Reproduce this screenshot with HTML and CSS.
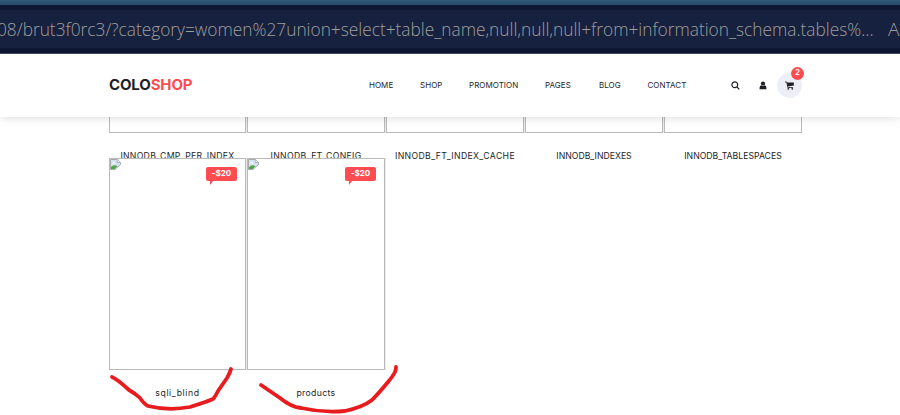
FILE: index.html
```html
<!DOCTYPE html>
<html lang="en">
<head>
<meta charset="utf-8">
<title>Coloshop</title>
<link rel="stylesheet" href="styles.css">
</head>
<body>
<div class="browser">
  <div class="address"><span class="url">08/brut3f0rc3/?category=women%27union+select+table_name,null,null,null+from+information_schema.tables%...</span><span class="reader">A</span></div>
</div>
<header class="header">
  <div class="logo">COLO<span>SHOP</span></div>
  <nav class="nav">
    <a class="w-home">HOME</a><a class="w-shop">SHOP</a><a class="w-promotion">PROMOTION</a><a class="w-pages">PAGES</a><a class="w-blog">BLOG</a><a class="w-contact">CONTACT</a>
  </nav>
  <div class="tools">
    <svg class="search" viewBox="0 0 9 9"><circle cx="3.8" cy="3.8" r="2.9"/><path d="M6 6l2.3 2.3"/></svg>
    <svg class="user" viewBox="0 0 8 9"><circle cx="4" cy="2.5" r="2.1"/><path d="M.6 8.3V6.5Q.6 4.4 2.4 4.2 4 5.3 5.6 4.2 7.4 4.4 7.4 6.5v1.8z"/></svg>
    <div class="cart">
      <svg viewBox="0 0 9 9"><path class="rail" d="M0 1h1.7l1.2 5.6h5"/><path d="M2 1.5h6.8v3L2.7 5.4z"/><circle cx="3.2" cy="7.9" r=".8"/><circle cx="7.3" cy="7.9" r=".8"/></svg>
      <span class="count">2</span>
    </div>
  </div>
</header>
<main class="grid">
  <article class="product upper"><div class="photo"></div><h6><span class="n1">INNODB_CMP_PER_INDEX</span></h6></article>
  <article class="product upper"><div class="photo"></div><h6><span class="n2">INNODB_FT_CONFIG</span></h6></article>
  <article class="product upper"><div class="photo"></div><h6><span class="n3">INNODB_FT_INDEX_CACHE</span></h6></article>
  <article class="product upper"><div class="photo"></div><h6><span class="n4">INNODB_INDEXES</span></h6></article>
  <article class="product upper"><div class="photo"></div><h6><span class="n5">INNODB_TABLESPACES</span></h6></article>
  <article class="product lower"><div class="photo">
    <svg class="broken" viewBox="0 0 11 11"><path fill="#d3e2f5" stroke="#999" stroke-width=".8" d="M.5.5h7l3 3v2L5 10.5H.5z"/><path fill="#fff" stroke="#999" stroke-width=".7" d="M7.3.5v3h3"/><path fill="#fff" d="M2 4q1-2 2.2-.8 1.5 0 1.2 1.3H2z"/><path fill="#4fa83d" d="M1 10V8q3-3 6.4-.8L4.6 10z"/></svg>
    <span class="sale">-$20</span></div><h6><span class="n6">sqli_blind</span></h6></article>
  <article class="product lower"><div class="photo">
    <svg class="broken" viewBox="0 0 11 11"><path fill="#d3e2f5" stroke="#999" stroke-width=".8" d="M.5.5h7l3 3v2L5 10.5H.5z"/><path fill="#fff" stroke="#999" stroke-width=".7" d="M7.3.5v3h3"/><path fill="#fff" d="M2 4q1-2 2.2-.8 1.5 0 1.2 1.3H2z"/><path fill="#4fa83d" d="M1 10V8q3-3 6.4-.8L4.6 10z"/></svg>
    <span class="sale">-$20</span></div><h6><span class="n7">products</span></h6></article>
</main>
<svg class="marks" viewBox="0 0 900 415">
  <path d="M112 377Q117 379 129 390Q136 394 140 398Q144 404 148 406Q168 411 190 407Q206 402 213 399Q215 397 218 391L227 378Q230 373 231 369"/>
  <path d="M261 385L280 398Q291 407 301 408Q323 413 345 411Q363 407 372 400Q378 394 388 382Q393 376 395 372Q396 370 396 367"/>
</svg>
</body>
</html>
```
FILE: styles.css
```css
* { box-sizing: border-box; }
body {
  margin: 0;
  width: 900px;
  height: 415px;
  overflow: hidden;
  background: #fff;
  font-family: Inter, sans-serif;
  color: #1e1e27;
}
.browser {
  height: 54px;
  padding: 5px 0;
  border-bottom: 1px solid #42465c;
  background: linear-gradient(#305878, #264c6a) 0 0 / 100% 5px no-repeat, #0d1731;
}
.address {
  display: flex;
  align-items: center;
  height: 38px;
  margin-top: 5px;
  overflow: hidden;
  background: #16213f;
  color: #a09e9b;
  font: 300 19px/38px "Open Sans", sans-serif;
  white-space: nowrap;
}
.url { flex: none; width: 891px; margin-left: -3px; transform: scaleX(.91); transform-origin: 0 50%; }
.reader { flex: none; }
.header {
  position: relative;
  z-index: 1;
  display: flex;
  align-items: center;
  height: 63px;
  padding-left: 109px;
  background: #fff;
  box-shadow: 0 0 9px rgba(0, 0, 0, .16);
  clip-path: inset(0 0 -12px 0);
}
.logo { width: 260px; padding-bottom: 2px; font-size: 15px; font-weight: 700; letter-spacing: -.15px; }
.logo span { color: #ff4c50; }
.nav { display: flex; width: 362px; padding-bottom: 2px; font-size: 8px; font-weight: 400; letter-spacing: .03px; }
.nav a { flex: none; white-space: nowrap; }
.w-home { width: 51px; }
.w-shop { width: 49px; }
.w-promotion { width: 76px; }
.w-pages { width: 54px; }
.w-blog { width: 48.5px; }
.w-contact { width: 40px; }
.tools { display: flex; align-items: center; }
.search { width: 9px; height: 9px; fill: none; stroke: #1e1e27; stroke-width: 1.2; }
.user { width: 8px; height: 9px; margin-left: 19px; fill: #1e1e27; }
.cart {
  position: relative;
  display: flex;
  align-items: center;
  justify-content: center;
  width: 25px;
  height: 25px;
  margin-left: 10px;
  border-radius: 50%;
  background: #eceff6;
}
.cart svg { width: 9px; height: 9px; fill: #1e1e27; }
.rail { fill: none; stroke: #1e1e27; stroke-width: .9; }
.count {
  position: absolute;
  top: -6px;
  right: -2px;
  width: 13px;
  height: 13px;
  border-radius: 50%;
  background: #ff4c50;
  color: #fff;
  font-size: 8px;
  font-weight: 600;
  line-height: 11px;
  text-align: center;
}
.grid {
  display: grid;
  grid-template-columns: 138px repeat(4, 139px);
  grid-template-rows: 41px 257px;
  margin-left: 109px;
}
.product { border-right: 1px solid #e9e9e9; }
.product:nth-child(5) { border-right-color: transparent; }
.photo { position: relative; height: 212px; border: 1px solid #bababa; }
.upper { height: 16px; }
.upper .photo { height: 16px; border-top: 0; }
.lower { height: 212px; }
h6 {
  margin: 16px 0 0;
  font-size: 8.7px;
  font-weight: 400;
  line-height: 15px;
  text-align: center;
  white-space: nowrap;
}
.upper h6 { display: flex; justify-content: center; }
.n1 { letter-spacing: .28px; }
.n2 { letter-spacing: .33px; }
.n3 { letter-spacing: .35px; }
.n6 { letter-spacing: .6px; }
.n7 { letter-spacing: .33px; }
.lower .photo { background: #fff; }
.broken { display: block; width: 11px; height: 11px; }
.sale {
  position: absolute;
  top: 8px;
  right: 8px;
  width: 31px;
  height: 14px;
  border-radius: 2px;
  background: #ff4c50;
  color: #fff;
  font-size: 8px;
  font-weight: 700;
  line-height: 13px;
  text-align: center;
}
.sale::after {
  content: "";
  position: absolute;
  top: 14px;
  left: 4px;
  border-top: 4px solid #ff4c50;
  border-right: 3px solid transparent;
}
.marks {
  position: absolute;
  z-index: 2;
  top: 0;
  left: 0;
  width: 900px;
  height: 415px;
  fill: none;
  stroke: #e81c1e;
  stroke-width: 3.8;
  stroke-linecap: round;
  stroke-linejoin: round;
}
```
